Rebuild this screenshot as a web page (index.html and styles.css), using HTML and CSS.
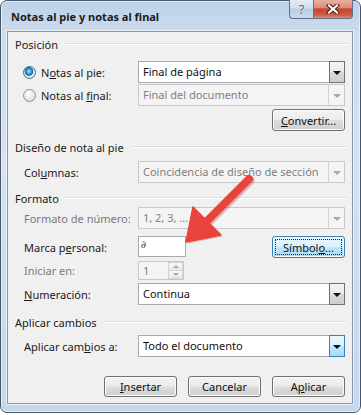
FILE: index.html
```html
<!DOCTYPE html>
<html lang="es">
<head>
<meta charset="utf-8">
<title>Notas al pie y notas al final</title>
<link rel="stylesheet" href="styles.css">
</head>
<body>
<div class="window">
  <div class="titlebar">
    <div class="title">Notas al pie y notas al final</div>
    <div class="caption">
      <div class="cb help">?</div>
      <div class="cb close">
        <svg width="14" height="10" viewBox="0 0 14 10">
          <path d="M3 1.5 L11 8.5 M11 1.5 L3 8.5" stroke="#4a2219" stroke-width="4.2" stroke-linecap="square" fill="none"/>
          <path d="M3 1.5 L11 8.5 M11 1.5 L3 8.5" stroke="#ffffff" stroke-width="2.2" stroke-linecap="square" fill="none"/>
        </svg>
      </div>
    </div>
  </div>

  <div class="client">
    <div class="ghead g1"><span>Posición</span><i class="rule"></i></div>

    <div class="row r1">
      <div class="lbl radio-lbl"><span class="radio on"></span><span>N<u>o</u>tas al pie:</span></div>
      <div class="select"><span class="val">Final de página</span><span class="drop"><i class="tri"></i></span></div>
    </div>
    <div class="row r2">
      <div class="lbl radio-lbl"><span class="radio"></span><span>Notas al <u>f</u>inal:</span></div>
      <div class="select dis"><span class="val">Final del documento</span><span class="drop"><i class="tri"></i></span></div>
    </div>
    <div class="row r3 right">
      <div class="btn"><u>C</u>onvertir...</div>
    </div>

    <div class="ghead g2"><span>Diseño de nota al pie</span><i class="rule"></i></div>
    <div class="row r4">
      <div class="lbl">Col<u>u</u>mnas:</div>
      <div class="select dis"><span class="val">Coincidencia de diseño de sección</span><span class="drop"><i class="tri"></i></span></div>
    </div>

    <div class="ghead g3"><span>Formato</span><i class="rule"></i></div>
    <div class="row r5">
      <div class="lbl gray">Formato de número:</div>
      <div class="select dis"><span class="val">1, 2, 3, ...</span><span class="drop"><i class="tri"></i></span></div>
    </div>
    <div class="row r6">
      <div class="lbl">Marca p<u>e</u>rsonal:</div>
      <div class="input"><span class="mark">∂</span></div>
      <div class="fill"></div>
      <div class="btn focus">Símbol<u>o</u>...</div>
    </div>
    <div class="row r7">
      <div class="lbl gray">Iniciar en:</div>
      <div class="spin"><span class="val">1</span><span class="spin-btns"><span class="sb"><i class="up"></i></span><span class="sb"><i class="dn"></i></span></span></div>
    </div>
    <div class="row r8">
      <div class="lbl"><u>N</u>umeración:</div>
      <div class="select"><span class="val">Continua</span><span class="drop"><i class="tri"></i></span></div>
    </div>

    <div class="ghead g4"><span>Aplicar cambios</span><i class="rule"></i></div>
    <div class="row r9">
      <div class="lbl">Aplicar cam<u>b</u>ios a:</div>
      <div class="select"><span class="val">Todo el documento</span><span class="drop hot"><i class="tri"></i></span></div>
    </div>

    <div class="footer">
      <div class="btn"><u>I</u>nsertar</div>
      <div class="btn">Cancelar</div>
      <div class="btn">A<u>p</u>licar</div>
    </div>
  </div>

  <svg class="arrow" width="361" height="415" viewBox="0 0 361 415">
    <g opacity="0.25" transform="translate(1.5,1.5)">
      <line x1="249" y1="179" x2="207" y2="221" stroke="#7a1010" stroke-width="8.5" stroke-linecap="round"/>
      <polygon points="186,242 193,207 221,235" fill="#7a1010"/>
    </g>
    <line x1="249" y1="179" x2="207" y2="221" stroke="#e8433d" stroke-width="8" stroke-linecap="round"/>
    <polygon points="186,242 193,207 221,235" fill="#e8433d" stroke="#e8433d" stroke-width="1.5" stroke-linejoin="round"/>
  </svg>
</div>
</body>
</html>
```

FILE: styles.css
```css
* { box-sizing: border-box; }

html, body {
  margin: 0;
  padding: 0;
  background: #ffffff;
}

body {
  font-family: "Noto Sans", "Open Sans", sans-serif;
  font-size: 11px;
  color: #1a1a1a;
  width: 361px;
  height: 415px;
  overflow: hidden;
}

u { text-decoration: underline; text-underline-offset: 1px; }

.window {
  position: relative;
  width: 361px;
  height: 413px;
  border: 1px solid #47566a;
  border-radius: 7px;
  background: linear-gradient(180deg, #bcd1e9 0%, #cddcee 8%, #d4e2f1 40%, #c4d7ec 100%);
  padding: 0 7px 8px 6px;
  box-shadow: inset 0 0 0 1px rgba(255,255,255,0.55);
}

/* title bar */
.titlebar {
  height: 30px;
  display: flex;
  align-items: flex-start;
}

.title {
  flex: 1;
  padding: 8px 0 0 4px;
  font-size: 11px;
  font-weight: 700;
  color: #1b1b1b;
  line-height: 16px;
}

.caption {
  display: flex;
  margin-top: -1px;
  height: 19px;
}

.cb {
  height: 19px;
  display: flex;
  align-items: center;
  justify-content: center;
  border: 1px solid #5f7189;
  border-top: none;
}

.help {
  width: 24px;
  border-right: none;
  border-radius: 0 0 0 4px;
  background: linear-gradient(180deg, #e4ecf5 0%, #d2dfed 45%, #b9cce2 50%, #cbdaeb 100%);
  color: #55687e;
  font-size: 13px;
  line-height: 1;
  text-shadow: 0 0 2px #ffffff;
}

.close {
  width: 40px;
  border-radius: 0 0 4px 0;
  background: linear-gradient(180deg, #eab0a3 0%, #dc8c78 42%, #c7442c 50%, #cf5f44 85%, #e0917a 100%);
}

/* client area */
.client {
  border: 1px solid #8697ad;
  background: #f0f0f0;
  padding: 0 0 6px 0;
  box-shadow: 0 0 0 1px rgba(255,255,255,0.6);
}

.ghead {
  height: 16px;
  display: flex;
  align-items: center;
  padding: 0 5px 0 7px;
  color: #1a1a1a;
}

.ghead .rule {
  flex: 1;
  height: 2px;
  margin-left: 7px;
  border-top: 1px solid #d5dfe5;
  border-bottom: 1px solid #ffffff;
}

.g1 { margin-top: 4px; }
.g2 { margin-top: 8px; }
.g3 { margin-top: 7px; }
.g4 { margin-top: 9px; }

.row {
  display: flex;
  align-items: center;
  height: 22px;
  padding: 0 7px 0 16px;
}

.row.right { justify-content: flex-end; }

.r1 { margin-top: 9px; }
.r2 { margin-top: 1px; }
.r3 { margin-top: 3px; }
.r4 { margin-top: 6px; }
.r5 { margin-top: 1px; }
.r6 { margin-top: 7px; }
.r7 { margin-top: 3px; height: 19px; }
.r8 { margin-top: 3px; }
.r9 { margin-top: 5px; }

.lbl {
  width: 114px;
  flex: none;
  color: #1a1a1a;
}

.lbl.gray { color: #7a7a7a; }

.radio-lbl {
  display: flex;
  align-items: center;
  gap: 5px;
}

.radio {
  width: 13px;
  height: 13px;
  margin-left: -1px;
  border-radius: 50%;
  border: 1px solid #8d8f92;
  background: radial-gradient(circle at 40% 35%, #ffffff 0%, #e4e4e4 60%, #cfcfcf 100%);
  flex: none;
}

.radio.on {
  border-color: #3b6f98;
  background: radial-gradient(circle at 45% 40%, #a6e3fb 0px, #3a9bd6 2.5px, #1c5f93 4px, #d7e6f2 4.6px, #f3f6f9 100%);
}

/* select boxes */
.select {
  flex: 1;
  height: 22px;
  display: flex;
  border: 1px solid #a5a9b1;
  background: #ffffff;
}

.select .val {
  flex: 1;
  padding-left: 4px;
  line-height: 20px;
  white-space: nowrap;
  overflow: hidden;
  color: #111111;
}

.drop {
  width: 16px;
  margin: -1px -1px -1px 0;
  border: 1px solid #707070;
  background: linear-gradient(180deg, #f5f5f5 0%, #e9e9e9 50%, #dadada 52%, #cdcdcd 100%);
  display: flex;
  align-items: center;
  justify-content: center;
}

.tri {
  width: 0;
  height: 0;
  border-left: 4px solid transparent;
  border-right: 4px solid transparent;
  border-top: 4px solid #111111;
  margin-top: 1px;
}

.drop.hot {
  border-color: #3c7fb1;
  background: linear-gradient(180deg, #eaf6fd 0%, #d9f0fc 50%, #bee6fd 52%, #a7d9f5 100%);
}

.select.dis {
  border-color: #c9c9c9;
  background: #f4f4f4;
}

.select.dis .val { color: #808080; }

.select.dis .drop {
  margin: 0;
  border: none;
  border-left: 1px solid #d2d2d2;
  background: #f4f4f4;
}

.select.dis .tri { border-top-color: #a8a8a8; }

/* text input */
.input {
  width: 48px;
  height: 21px;
  border: 1px solid #a5a9b1;
  background: #ffffff;
  padding-left: 2px;
  line-height: 14px;
  margin-top: -1px;
}

.mark {
  font-family: "DejaVu Serif", serif;
  font-style: italic;
  font-size: 10px;
  color: #333333;
}

.fill { flex: 1; }

/* spin */
.spin {
  width: 46px;
  height: 19px;
  display: flex;
  border: 1px solid #c9c9c9;
  background: #f4f4f4;
}

.spin .val {
  flex: 1;
  padding-left: 4px;
  line-height: 17px;
  color: #808080;
}

.spin-btns {
  width: 15px;
  display: flex;
  flex-direction: column;
}

.sb {
  flex: 1;
  border: 1px solid #d2d2d2;
  background: linear-gradient(180deg, #f7f7f7, #e9e9e9);
  display: flex;
  align-items: center;
  justify-content: center;
}

.sb + .sb { border-top: none; }

.up, .dn {
  width: 0;
  height: 0;
  border-left: 3px solid transparent;
  border-right: 3px solid transparent;
}
.up { border-bottom: 3px solid #a8a8a8; }
.dn { border-top: 3px solid #a8a8a8; }

/* buttons */
.btn {
  width: 73px;
  height: 22px;
  border: 1px solid #707070;
  border-radius: 3px;
  background: linear-gradient(180deg, #f3f3f3 0%, #ebebeb 48%, #dddddd 52%, #cfcfcf 100%);
  box-shadow: inset 0 0 0 1px #fbfbfb;
  display: flex;
  align-items: center;
  justify-content: center;
  color: #111111;
  flex: none;
}

.btn.focus {
  border-color: #3c7fb1;
  background: linear-gradient(180deg, #eaf6fd 0%, #d9f0fc 48%, #bee6fd 52%, #a7d9f5 100%);
  outline: 1px dotted #222222;
  outline-offset: -4px;
}

.footer {
  display: flex;
  justify-content: flex-end;
  gap: 11px;
  margin-top: 19px;
  padding-right: 7px;
}

.footer .btn { height: 21px; }

.arrow {
  position: absolute;
  left: -1px;
  top: -1px;
  pointer-events: none;
}
```
